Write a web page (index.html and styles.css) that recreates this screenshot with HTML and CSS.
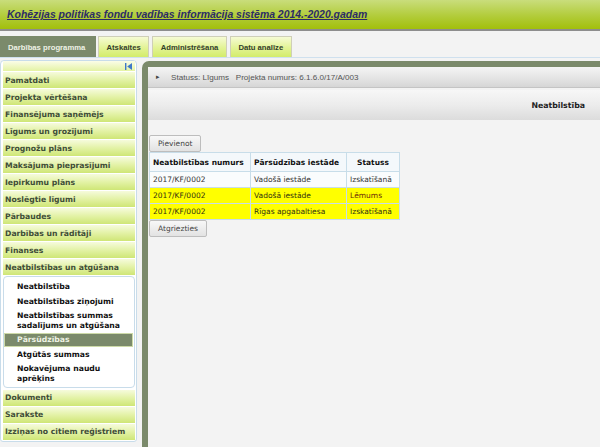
FILE: index.html
```html
<!DOCTYPE html>
<html lang="lv">
<head>
<meta charset="utf-8">
<link rel="stylesheet" href="styles.css">
</head>
<body>
<header class="header">
  <a class="title" href="#">Kohēzijas politikas fondu vadības informācija sistēma 2014.-2020.gadam</a>
</header>
<div class="tabs">
  <span class="tab active">Darbības programma</span>
  <span class="tab">Atskaites</span>
  <span class="tab">Administrēšana</span>
  <span class="tab">Datu analīze</span>
</div>
<div class="layout">
  <nav class="sidebar">
    <div class="side-top">
      <svg class="collapse" width="7" height="7" viewBox="0 0 7 7"><rect x="0" y="0" width="1.4" height="7" fill="#3f78c8"/><polygon points="7,0 7,7 2.2,3.5" fill="#3f78c8"/></svg>
    </div>
    <a class="item">Pamatdati</a>
    <a class="item">Projekta vērtēšana</a>
    <a class="item">Finansējuma saņēmējs</a>
    <a class="item">Līgums un grozījumi</a>
    <a class="item">Prognožu plāns</a>
    <a class="item">Maksājuma pieprasījumi</a>
    <a class="item">Iepirkumu plāns</a>
    <a class="item">Noslēgtie līgumi</a>
    <a class="item">Pārbaudes</a>
    <a class="item">Darbības un rādītāji</a>
    <a class="item">Finanses</a>
    <a class="item">Neatbilstības un atgūšana</a>
    <div class="submenu">
      <a class="sub">Neatbilstība</a>
      <a class="sub">Neatbilstības ziņojumi</a>
      <a class="sub">Neatbilstības summas sadalījums un atgūšana</a>
      <a class="sub selected">Pārsūdzības</a>
      <a class="sub">Atgūtās summas</a>
      <a class="sub">Nokavējuma naudu aprēķins</a>
    </div>
    <a class="item">Dokumenti</a>
    <a class="item">Sarakste</a>
    <a class="item">Izziņas no citiem reģistriem</a>
  </nav>
  <main class="panel">
    <div class="statusbar">
      <span class="arrow">&#9656;</span>
      <span>Statuss: Līgums&nbsp;&nbsp;&nbsp;Projekta numurs: 6.1.6.0/17/A/003</span>
    </div>
    <div class="pagehead">Neatbilstība</div>
    <div class="content">
      <button class="btn">Pievienot</button>
      <table class="grid">
        <thead>
          <tr><th class="c1">Neatbilstības numurs</th><th class="c2">Pārsūdzības iestāde</th><th class="c3">Statuss</th></tr>
        </thead>
        <tbody>
          <tr><td>2017/KF/0002</td><td>Vadošā iestāde</td><td>Izskatīšanā</td></tr>
          <tr class="hl"><td>2017/KF/0002</td><td>Vadošā iestāde</td><td class="decision">Lēmums</td></tr>
          <tr class="hl"><td>2017/KF/0002</td><td>Rīgas apgabaltiesa</td><td>Izskatīšanā</td></tr>
        </tbody>
      </table>
      <button class="btn">Atgriezties</button>
    </div>
  </main>
</div>
</body>
</html>
```
FILE: styles.css
```css
html, body {
  margin: 0;
  padding: 0;
  overflow: hidden;
}
body {
  width: 600px;
  height: 447px;
  background: #f3f3f3;
  font-family: "DejaVu Sans", Verdana, sans-serif;
}
.header {
  height: 29px;
  background: linear-gradient(#c9dd7c, #b2cc3a 55%, #a2bf0c);
  border-bottom: 2px solid #8d8d8d;
  display: flex;
  align-items: center;
  padding-left: 7px;
}
.title {
  font-family: "Liberation Sans", Arial, sans-serif;
  font-size: 10.45px;
  font-weight: bold;
  font-style: italic;
  color: #2c2c66;
  text-decoration: underline;
}
.tabs {
  display: flex;
  padding-top: 5px;
  border-bottom: 1px solid #cfe0ee;
  height: 21px;
}
.tab {
  font-family: "Liberation Sans", Arial, sans-serif;
  font-size: 7.7px;
  font-weight: bold;
  color: #33402c;
  display: flex;
  align-items: center;
  padding: 0 7.5px;
  margin-left: 3px;
  background: linear-gradient(#f6fbd4, #e2f394 55%, #d3ec6a);
  border: 1px solid #cfcfb8;
  border-bottom: none;
  box-sizing: border-box;
}
.tab.active {
  margin-left: 0;
  padding: 0 7px;
  width: 96px;
  background: #7b8a6b;
  border-color: #7b8a6b;
  color: #eef2e6;
}
.tab.active + .tab {
  margin-left: 2px;
}
.layout {
  display: flex;
  align-items: flex-start;
}
.sidebar {
  width: 137px;
  box-sizing: border-box;
  margin-top: 2px;
  background: #fff;
  border: 1px solid #c8dcea;
  border-radius: 4px 4px 3px 3px;
  display: flex;
  flex-direction: column;
  padding: 0 1px 1px 2px;
}
.side-top {
  height: 10px;
  background: linear-gradient(#fbfde8, #e4f3a4);
  display: flex;
  justify-content: flex-end;
  align-items: center;
  padding-right: 3px;
}
.item {
  height: 16px;
  border-top: 1px solid #fff;
  background: linear-gradient(#f6fbdc, #e3f2a6 50%, #cfe676);
  font-size: 7.7px;
  font-weight: bold;
  color: #404d38;
  display: flex;
  align-items: center;
  padding-left: 2px;
  white-space: nowrap;
}
.submenu {
  margin: 1px 0 1px 0;
  border: 1px solid #c8dcea;
  border-radius: 4px;
  background: #fff;
  padding: 2.5px 1px 1px 0;
  display: flex;
  flex-direction: column;
}
.sub {
  font-size: 7.7px;
  font-weight: bold;
  color: #111;
  line-height: 9.5px;
  padding: 2.5px 6px 2.5px 13px;
}
.sub.selected {
  background: #7b8a6b;
  color: #eef3e4;
  border: 1px solid #cddaa8;
  padding: 1.5px 6px 1.5px 12px;
}
.panel {
  margin-top: 3px;
  margin-left: 5px;
  flex: 1;
  height: 386px;
  box-sizing: border-box;
  border-top: 6px solid #7b8a6b;
  border-left: 6px solid #7b8a6b;
  border-top-left-radius: 7px;
  background: #f3f3f3;
}
.statusbar {
  height: 20px;
  background: linear-gradient(#f5f5f5, #e6e6e6 50%, #d6d6d6);
  border-bottom: 1px solid #c4c4c4;
  display: flex;
  align-items: center;
  font-family: "Liberation Sans", Arial, sans-serif;
  font-size: 8.1px;
  color: #555;
  padding-left: 8px;
}
.statusbar .arrow {
  font-size: 7px;
  color: #444;
  margin-right: 11px;
}
.pagehead {
  margin-top: 2px;
  height: 30px;
  background: linear-gradient(#f7f7f7, #ececec 50%, #dcdcdc);
  display: flex;
  align-items: center;
  justify-content: flex-end;
  padding-right: 15px;
  font-size: 7.8px;
  font-weight: bold;
  color: #222;
}
.content {
  padding: 15px 0 0 1px;
  display: flex;
  flex-direction: column;
  align-items: flex-start;
}
.btn {
  font-family: "DejaVu Sans", Verdana, sans-serif;
  font-size: 7.5px;
  color: #444;
  height: 17px;
  padding: 0 8px;
  background: linear-gradient(#f8f8f8, #e2e2e2);
  border: 1px solid #bdbdbd;
  border-radius: 2px;
  margin: 0;
}
.grid {
  border-collapse: collapse;
  font-size: 7.5px;
  color: #333;
  border: 1px solid #c8dde9;
}
.grid th, .grid td {
  border: 1px solid #c8dde9;
  padding: 0 3px;
  text-align: left;
  white-space: nowrap;
}
.grid th {
  height: 18px;
  font-weight: bold;
  color: #111;
  background: #f4f8fb;
}
.grid th.c1 { width: 94px; }
.grid th.c2 { width: 89px; }
.grid th.c3 { width: 46px; text-align: center; }
.grid td {
  height: 15px;
  background: #fafcfd;
}
.grid tr.hl td {
  background: #ffff00;
  color: #2f2f10;
}
.grid td.decision {
  color: #6b2a08 !important;
}
```
